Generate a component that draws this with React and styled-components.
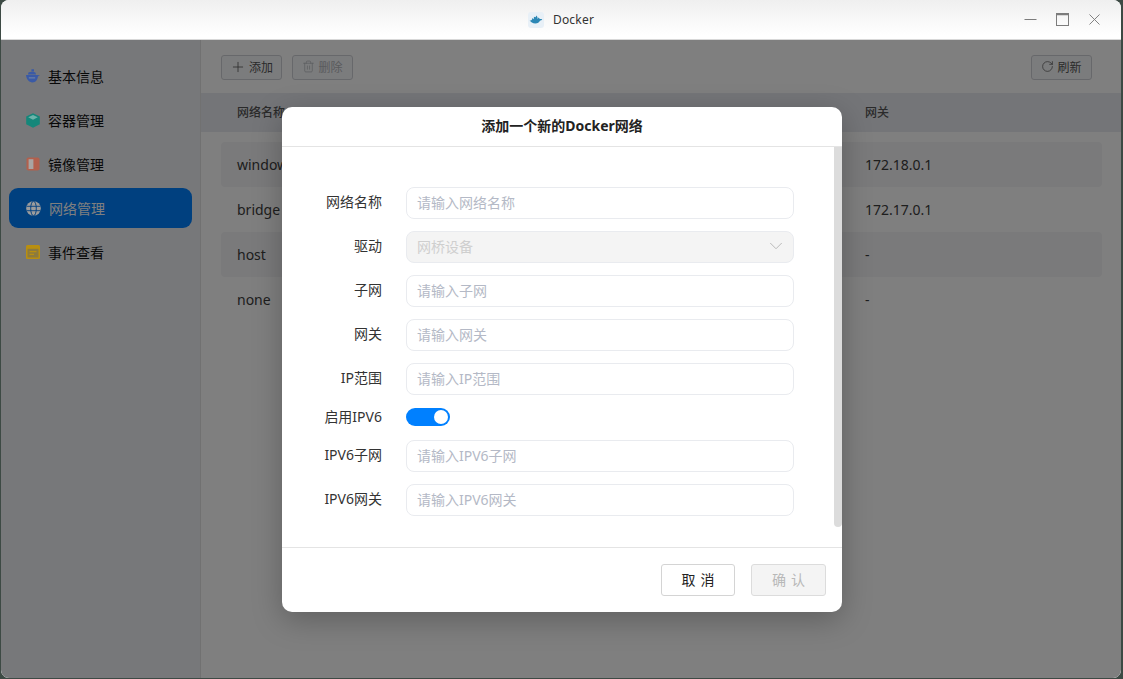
import React from "react";
import styled, { createGlobalStyle } from "styled-components";
import { Plus, Trash2, RotateCw, ChevronDown, Minus, X } from "lucide-react";

const FONT = `"Noto Sans", "Noto Sans CJK SC", sans-serif`;

const GlobalStyle = createGlobalStyle`
  html, body {
    margin: 0;
    height: 100%;
    background: #3d4a44;
    overflow: hidden;
  }
  #root { height: 100%; }
  * { box-sizing: border-box; }
`;

const Desktop = styled.div`
  height: 679px;
  padding: 0 2px 1px 1px;
  font-family: ${FONT};
`;

const Window = styled.div`
  position: relative;
  display: flex;
  flex-direction: column;
  height: 100%;
  border-radius: 8px;
  overflow: hidden;
  background: #fff;
`;

const TitleBar = styled.div`
  position: relative;
  flex: 0 0 40px;
  display: flex;
  align-items: center;
  justify-content: center;
  gap: 9px;
  background: linear-gradient(#efefef, #ffffff 90%);
  border-bottom: 1px solid #d8d8d8;
  font-size: 12px;
  letter-spacing: 0.2px;
  color: #333;
`;

const WinControls = styled.div`
  position: absolute;
  right: 17px;
  top: 0;
  height: 39px;
  display: flex;
  align-items: center;
  gap: 13px;
  color: #7c7c7c;
`;

const Content = styled.div`
  flex: 1;
  display: flex;
  min-height: 0;
`;

const Sidebar = styled.nav`
  flex: 0 0 200px;
  background: #eef0f4;
  border-right: 1px solid #e2e2e2;
  padding: 16px 8px 0;
  display: flex;
  flex-direction: column;
  gap: 4px;
`;

const NavItem = styled.div`
  height: 40px;
  display: flex;
  align-items: center;
  gap: 8px;
  padding-left: 17px;
  border-radius: 9px;
  font-size: 14px;
  color: ${(p) => (p.$active ? "#fff" : "#111")};
  background: ${(p) => (p.$active ? "#0080ff" : "transparent")};
`;

/* the menu icons show through the dimming layer in the reference */
const IconSlot = styled.span`
  position: relative;
  z-index: 1;
  display: flex;
`;

const Main = styled.main`
  flex: 1;
  background: #fff;
  min-width: 0;
`;

const Toolbar = styled.div`
  height: 53px;
  display: flex;
  align-items: center;
  gap: 10px;
  padding: 1px 29px 0 20px;
`;

const Spacer = styled.div`
  flex: 1;
`;

const ToolButton = styled.div`
  height: 25px;
  width: 61px;
  display: flex;
  align-items: center;
  justify-content: center;
  gap: 3px;
  padding-bottom: 1px;
  border: 1px solid #cfd1d6;
  border-radius: 3px;
  background: #f7f8fa;
  font-size: 12px;
  color: ${(p) => (p.$disabled ? "#b4b6bc" : "#555")};
`;

const HeadRow = styled.div`
  height: 39px;
  display: grid;
  grid-template-columns: 628px 1fr;
  align-items: center;
  padding: 0 0 2px 36px;
  background: #e9ebf1;
  font-size: 12px;
  font-weight: 500;
  color: #555;
`;

const Rows = styled.div`
  padding: 10px 19px 0 20px;
`;

const Row = styled.div`
  height: 45px;
  display: grid;
  grid-template-columns: 628px 1fr;
  align-items: center;
  padding-left: 16px;
  border-radius: 4px;
  font-size: 14px;
  color: #3c3c3c;
  background: ${(p) => (p.$striped ? "#f4f5f7" : "transparent")};
`;

const Overlay = styled.div`
  position: absolute;
  left: 0;
  right: 0;
  top: 40px;
  bottom: 0;
  background: rgba(0, 0, 0, 0.5);
  display: flex;
  align-items: center;
  justify-content: center;
  padding-left: 2px;
`;

const Modal = styled.div`
  position: relative;
  width: 560px;
  height: 505px;
  background: #fff;
  border-radius: 10px;
  display: flex;
  flex-direction: column;
  box-shadow: 0 8px 30px rgba(0, 0, 0, 0.25);
  overflow: hidden;
`;

const ModalTitle = styled.div`
  flex: 0 0 40px;
  display: flex;
  align-items: center;
  justify-content: center;
  padding-bottom: 2px;
  border-bottom: 1px solid #e4e4e4;
  font-size: 14px;
  font-weight: 700;
  color: #222;
`;

const ModalBody = styled.div`
  flex: 1;
  padding: 40px 48px 0 0;
  display: flex;
  flex-direction: column;
  gap: 12px;
`;

const Scrollbar = styled.div`
  position: absolute;
  top: 40px;
  right: 0;
  width: 8px;
  height: 380px;
  background: #dcdcdc;
  border-radius: 0 0 4px 4px;
`;

const FormRow = styled.div`
  display: grid;
  grid-template-columns: 100px 388px;
  column-gap: 24px;
  align-items: center;
  min-height: ${(p) => (p.$compact ? "21px" : "32px")};
`;

const Label = styled.label`
  padding-bottom: 2px;
  text-align: right;
  font-size: 14px;
  line-height: 19px;
  color: #333;
`;

const Field = styled.div`
  height: 32px;
  display: flex;
  align-items: center;
  justify-content: space-between;
  padding: 0 10px 2px;
  border: 1px solid #e9ebef;
  border-radius: 8px;
  font-size: 14px;
  color: ${(p) => (p.$disabled ? "#cfcfcf" : "#b4b9c6")};
  background: ${(p) => (p.$disabled ? "#f4f4f4" : "#fff")};
`;

const Chevron = styled(ChevronDown)`
  margin-right: -4px;
  color: #b5b5b5;
`;

const Toggle = styled.div`
  position: relative;
  width: 44px;
  height: 18px;
  border-radius: 9px;
  background: #0080ff;
`;

const Knob = styled.span`
  position: absolute;
  right: 2px;
  top: 2px;
  width: 14px;
  height: 14px;
  border-radius: 50%;
  background: #fff;
`;

const ModalFooter = styled.div`
  flex: 0 0 65px;
  display: flex;
  align-items: center;
  justify-content: flex-end;
  gap: 16px;
  padding: 0 16px 0 0;
  border-top: 1px solid #e4e4e4;
`;

const FootButton = styled.div`
  width: ${(p) => (p.$disabled ? "75px" : "74px")};
  height: 32px;
  display: flex;
  align-items: center;
  justify-content: center;
  padding: 0 0 2px 5px;
  border: 1px solid ${(p) => (p.$disabled ? "#dcdcdc" : "#d4d4d4")};
  border-radius: 3px;
  font-size: 14px;
  letter-spacing: 5px;
  color: ${(p) => (p.$disabled ? "#b8b8b8" : "#222")};
  background: ${(p) => (p.$disabled ? "#f4f4f4" : "#fff")};
`;

const Whale = () => (
  <svg width="16" height="18" viewBox="0 0 16 18">
    <rect y="1" width="16" height="16" rx="3" fill="#e8f0f7" />
    <path d="M1.500 9.300c1.200.2 1.900 0 2.400-.5l.6-1.700 1.400 1.100V5.800l1.600.4L8.500 4.400l1 1.800v1.800l1.200-1.400 1.100 1.500c.9-.3 1.600-.2 2.400.3-.5.8-1.300 1.100-2.100 1.200-.9 2-2.500 2.800-4.700 2.800-2.800 0-4.600-1.100-5.400-2.900z" fill="#2b87b5" />
  </svg>
);

const MaxIcon = () => (
  <svg width="19" height="19" viewBox="0 0 19 19">
    <rect x="3.500" y="3.500" width="12" height="12" fill="none" stroke="currentColor" strokeWidth="1" />
    <path d="M3.500 4.500h12" stroke="currentColor" strokeWidth="1.500" />
  </svg>
);

const BaseIcon = () => (
  <svg width="14" height="14" viewBox="0 0 14 14">
    <path d="M5.400 0.300h2.600v2.300H5.400z" fill="#3a5aa6" />
    <path d="M2.400 3.600c1.800-1 5.400-1 7 0l.6 2H2z" fill="#3a5aa6" />
    <path d="M0 6.100h10.900l3.100.1-2.100 1.300C11.600 10.900 9.600 13.400 6.500 13.400 3 13.400.4 10.600 0 6.100z" fill="#3a5aa6" />
    <path d="M2.800 8.900h6.400" stroke="#7d8da8" strokeWidth="0.9" />
  </svg>
);

const BoxIcon = () => (
  <svg width="14" height="15" viewBox="0 0 14 15">
    <path d="M7 0.200l6.800 3.400v7.700L7 14.800.2 11.300V3.600z" fill="#15877a" />
    <path d="M7 2l4.800 2.300L7 6.800 2.200 4.300z" fill="#6db3aa" />
  </svg>
);

const MirrorIcon = () => (
  <svg width="14" height="14" viewBox="0 0 14 14">
    <rect x="0.500" y="0.500" width="13" height="13" rx="1.800" fill="#b2604d" />
    <rect x="2.600" y="2.200" width="4.800" height="9.800" fill="#a9a5a3" />
  </svg>
);

const GlobeIcon = () => (
  <svg width="15" height="15" viewBox="0 0 15 15">
    <circle cx="7.500" cy="7.500" r="7.300" fill="#9c9c9c" />
    <ellipse cx="7.500" cy="7.500" rx="2.800" ry="7.300" fill="none" stroke="#004080" strokeWidth="1" />
    <path d="M0.500 5.300h14M0.500 9.700h14" stroke="#004080" strokeWidth="0.900" />
  </svg>
);

const EventIcon = () => (
  <svg width="14" height="14" viewBox="0 0 14 14">
    <rect width="14" height="14" rx="1.500" fill="#b98f10" />
    <rect x="1.500" y="3.800" width="11" height="8.700" fill="#8c7a3e" />
    <path d="M3.500 6h7v1.200h-7zM3.500 8.700h4.500v1.200h-4.500z" fill="#b98f10" />
  </svg>
);

const nav = [
  { label: "基本信息", icon: <BaseIcon /> },
  { label: "容器管理", icon: <BoxIcon /> },
  { label: "镜像管理", icon: <MirrorIcon /> },
  { label: "网络管理", icon: <GlobeIcon />, active: true },
  { label: "事件查看", icon: <EventIcon /> },
];

const networks = [
  { name: "windows", gateway: "172.18.0.1" },
  { name: "bridge", gateway: "172.17.0.1" },
  { name: "host", gateway: "-" },
  { name: "none", gateway: "-" },
];

const fieldsTop = ["网络名称", "子网", "网关", "IP范围"];

export default function App() {
  return (
    <>
      <GlobalStyle />
      <Desktop>
        <Window>
          <TitleBar>
            <Whale />
            Docker
            <WinControls>
              <Minus size={19} strokeWidth={1.5} />
              <MaxIcon />
              <X size={19} strokeWidth={1.2} />
            </WinControls>
          </TitleBar>
          <Content>
            <Sidebar>
              {nav.map((n) => (
                <NavItem key={n.label} $active={n.active}>
                  <IconSlot>{n.icon}</IconSlot>
                  {n.label}
                </NavItem>
              ))}
            </Sidebar>
            <Main>
              <Toolbar>
                <ToolButton>
                  <Plus size={16} strokeWidth={1.2} />
                  添加
                </ToolButton>
                <ToolButton $disabled>
                  <Trash2 size={13} strokeWidth={1.3} />
                  删除
                </ToolButton>
                <Spacer />
                <ToolButton>
                  <RotateCw size={13} strokeWidth={1.3} />
                  刷新
                </ToolButton>
              </Toolbar>
              <HeadRow>
                <span>网络名称</span>
                <span>网关</span>
              </HeadRow>
              <Rows>
                {networks.map((n, i) => (
                  <Row key={n.name} $striped={i % 2 === 0}>
                    <span>{n.name}</span>
                    <span>{n.gateway}</span>
                  </Row>
                ))}
              </Rows>
            </Main>
          </Content>
          <Overlay>
            <Modal>
              <ModalTitle>添加一个新的Docker网络</ModalTitle>
              <ModalBody>
                <FormRow>
                  <Label>{fieldsTop[0]}</Label>
                  <Field>请输入网络名称</Field>
                </FormRow>
                <FormRow>
                  <Label>驱动</Label>
                  <Field $disabled>
                    网桥设备
                    <Chevron size={22} strokeWidth={1} />
                  </Field>
                </FormRow>
                {fieldsTop.slice(1).map((f) => (
                  <FormRow key={f}>
                    <Label>{f}</Label>
                    <Field>请输入{f}</Field>
                  </FormRow>
                ))}
                <FormRow $compact>
                  <Label>启用IPV6</Label>
                  <Toggle>
                    <Knob />
                  </Toggle>
                </FormRow>
                <FormRow>
                  <Label>IPV6子网</Label>
                  <Field>请输入IPV6子网</Field>
                </FormRow>
                <FormRow>
                  <Label>IPV6网关</Label>
                  <Field>请输入IPV6网关</Field>
                </FormRow>
              </ModalBody>
              <Scrollbar />
              <ModalFooter>
                <FootButton>取消</FootButton>
                <FootButton $disabled>确认</FootButton>
              </ModalFooter>
            </Modal>
          </Overlay>
        </Window>
      </Desktop>
    </>
  );
}
